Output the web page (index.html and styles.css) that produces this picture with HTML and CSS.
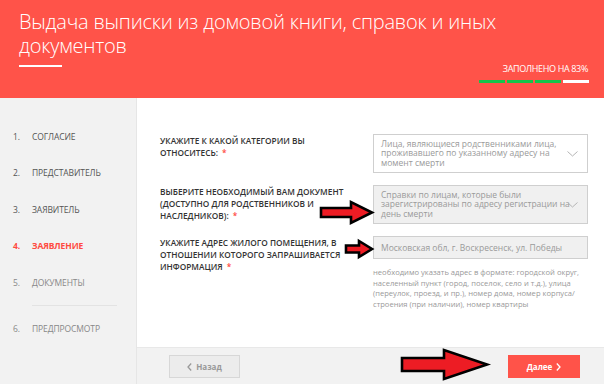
FILE: index.html
```html
<!DOCTYPE html>
<html lang="ru">
<head>
<meta charset="utf-8">
<title>Выдача выписки</title>
<link rel="stylesheet" href="styles.css">
</head>
<body>
<div class="page">
  <header class="hero">
    <h1 class="hero-title">Выдача выписки из домовой книги, справок и иных<br>документов</h1>
    <div class="hero-bottom">
      <span class="hero-line"></span>
      <div class="progress">
        <div class="progress-label">ЗАПОЛНЕНО НА 83%</div>
        <div class="progress-bars">
          <span class="bar done"></span><span class="bar done"></span><span class="bar done"></span><span class="bar"></span>
        </div>
      </div>
    </div>
  </header>
  <div class="body">
    <aside class="steps">
      <div class="step"><span class="num">1.</span>СОГЛАСИЕ</div>
      <div class="step"><span class="num">2.</span>ПРЕДСТАВИТЕЛЬ</div>
      <div class="step"><span class="num">3.</span>ЗАЯВИТЕЛЬ</div>
      <div class="step active"><span class="num">4.</span>ЗАЯВЛЕНИЕ</div>
      <div class="step future"><span class="num">5.</span>ДОКУМЕНТЫ</div>
      <div class="step-sep"></div>
      <div class="step future"><span class="num">6.</span>ПРЕДПРОСМОТР</div>
    </aside>
    <main class="content">
      <div class="form">
        <div class="row">
          <div class="label">УКАЖИТЕ К КАКОЙ КАТЕГОРИИ ВЫ<br>ОТНОСИТЕСЬ: <span class="req">*</span></div>
          <div class="field select">
            <span class="field-text">Лица, являющиеся родственниками лица,<br>проживавшего по указанному адресу на<br>момент смерти</span>
            <svg class="chev" width="11" height="6" viewBox="0 0 11 6"><polyline points="0.5,0.5 5.5,5 10.5,0.5" fill="none" stroke="#b5b5b5" stroke-width="1"/></svg>
          </div>
        </div>
        <div class="row">
          <div class="label">ВЫБЕРИТЕ НЕОБХОДИМЫЙ ВАМ ДОКУМЕНТ<br>(ДОСТУПНО ДЛЯ РОДСТВЕННИКОВ И<br>НАСЛЕДНИКОВ): <span class="req">*</span></div>
          <div class="field select filled">
            <span class="field-text">Справки по лицам, которые были<br>зарегистрированы по адресу регистрации на<br>день смерти</span>
            <svg class="chev" width="11" height="6" viewBox="0 0 11 6"><polyline points="0.5,0.5 5.5,5 10.5,0.5" fill="none" stroke="#b5b5b5" stroke-width="1"/></svg>
          </div>
        </div>
        <div class="row">
          <div class="label">УКАЖИТЕ АДРЕС ЖИЛОГО ПОМЕЩЕНИЯ, В<br>ОТНОШЕНИИ КОТОРОГО ЗАПРАШИВАЕТСЯ<br>ИНФОРМАЦИЯ <span class="req">*</span></div>
          <div class="field-col">
            <div class="field input filled">Московская обл, г. Воскресенск, ул. Победы</div>
            <p class="hint">необходимо указать адрес в формате: городской округ, населенный пункт (город, поселок, село и т.д.), улица (переулок, проезд, и пр.), номер дома, номер корпуса/ строения (при наличии), номер квартиры</p>
          </div>
        </div>
      </div>
      <footer class="actions">
        <button class="btn back"><svg width="5" height="8" viewBox="0 0 5 8"><polyline points="4.2,0.5 1,4 4.2,7.5" fill="none" stroke="#999" stroke-width="1.3"/></svg>Назад</button>
        <button class="btn next">Далее<svg width="5" height="8" viewBox="0 0 5 8"><polyline points="0.8,0.5 4,4 0.8,7.5" fill="none" stroke="#fff" stroke-width="1.3"/></svg></button>
      </footer>
    </main>
  </div>
  <svg class="arrows" width="604" height="384" viewBox="0 0 604 384">
    <polygon points="321,208 351,208 351,202 372,212.5 351,223 351,217 321,217" />
    <polygon points="346,245.5 359,245.5 359,241 372,249 359,257 359,252.5 346,252.5" />
    <polygon points="402,358 444,358 444,350 487,364.5 444,379 444,371 402,371" />
  </svg>
</div>
</body>
</html>
```
FILE: styles.css
```css
* { box-sizing: border-box; }
html, body { margin: 0; padding: 0; }
body {
  font-family: "Open Sans", "Liberation Sans", sans-serif;
  background: #fff;
  width: 604px;
  height: 384px;
  overflow: hidden;
}
.page {
  position: relative;
  width: 604px;
  height: 384px;
  display: flex;
  flex-direction: column;
}
.hero {
  height: 98px;
  flex: none;
  background: #ff5349;
  color: #fff;
  padding: 10px 16px 0 19px;
}
.hero-title {
  margin: 0;
  font-weight: 300;
  font-size: 20px;
  line-height: 24px;
  letter-spacing: -0.2px;
}
.hero-bottom {
  display: flex;
  justify-content: space-between;
  align-items: flex-start;
  margin-top: 7px;
}
.hero-line {
  display: block;
  width: 43px;
  height: 2px;
  background: #fff;
}
.progress {
  display: flex;
  flex-direction: column;
  align-items: flex-end;
  margin-top: -2px;
}
.progress-label {
  font-size: 9px;
  line-height: 12px;
  letter-spacing: -0.35px;
}
.progress-bars {
  display: flex;
  gap: 2px;
  margin-top: 5px;
  margin-right: -1px;
}
.bar {
  width: 26px;
  height: 3px;
  background: #fff;
}
.bar.done { background: #14c44a; }

.body {
  flex: 1;
  display: flex;
  min-height: 0;
}
.steps {
  width: 137px;
  flex: none;
  background: #f2f2f2;
  border-right: 1px solid #e6e6e6;
  padding-top: 20px;
  padding-left: 13px;
}
.step {
  height: 36.5px;
  display: flex;
  align-items: center;
  font-size: 8.5px;
  color: #555;
  letter-spacing: -0.1px;
}
.step .num { width: 19px; flex: none; }
.step.active { color: #ff4a41; font-weight: 700; }
.step.future { color: #888; }
.step-sep {
  height: 1px;
  width: 85px;
  background: #e3e3e3;
  margin: 4px 0 5px 19px;
}

.content {
  flex: 1;
  display: flex;
  flex-direction: column;
  min-width: 0;
}
.form {
  flex: 1;
  padding: 36px 16px 0 23px;
  display: flex;
  flex-direction: column;
  gap: 12px;
}
.row {
  display: grid;
  grid-template-columns: 1fr 215px;
  align-items: start;
}
.label {
  font-size: 8.3px;
  line-height: 12px;
  font-weight: 600;
  color: #333;
  padding-top: 1px;
  letter-spacing: 0;
}
.req { color: #ff4a41; margin-left: 2px; }
.field {
  border: 1px solid #cfcfcf;
  background: #fff;
  color: #9a9a9a;
  font-size: 8.5px;
}
.field.filled { background: #f0f0f0; }
.field.select {
  height: 39px;
  display: flex;
  align-items: center;
  padding: 0 9px 0 7px;
  line-height: 9.4px;
}
.field-text {
  flex: 1;
  min-width: 0;
  white-space: nowrap;
  padding-bottom: 1px;
}
.chev { flex: none; margin-left: 1px; }
.field.input {
  height: 23px;
  line-height: 21px;
  padding: 0 7px;
  white-space: nowrap;
  font-size: 8.5px;
}
.hint {
  margin: 8px 0 0;
  font-size: 7.6px;
  line-height: 10.6px;
  color: #999;
}

.actions {
  height: 37px;
  flex: none;
  background: #f2f2f2;
  border-top: 1px solid #e8e8e8;
  display: flex;
  justify-content: space-between;
  align-items: flex-start;
  padding: 7px 24px 0 32px;
}
.btn {
  font-family: "Open Sans", "Liberation Sans", sans-serif;
  font-weight: 700;
  font-size: 8px;
  height: 23px;
  display: flex;
  align-items: center;
  justify-content: center;
  gap: 4px;
  border-radius: 0;
  padding: 0;
  cursor: pointer;
}
.btn.back {
  width: 71px;
  background: #ececec;
  border: 1px solid #d7d7d7;
  color: #999;
}
.btn.next {
  width: 72px;
  background: #ff5349;
  border: 1px solid #ff5349;
  color: #fff;
}
.arrows {
  position: absolute;
  left: 0;
  top: 0;
  pointer-events: none;
}
.arrows polygon {
  fill: #ed1c24;
  stroke: #000;
  stroke-width: 2.6;
  stroke-linejoin: miter;
}
```
